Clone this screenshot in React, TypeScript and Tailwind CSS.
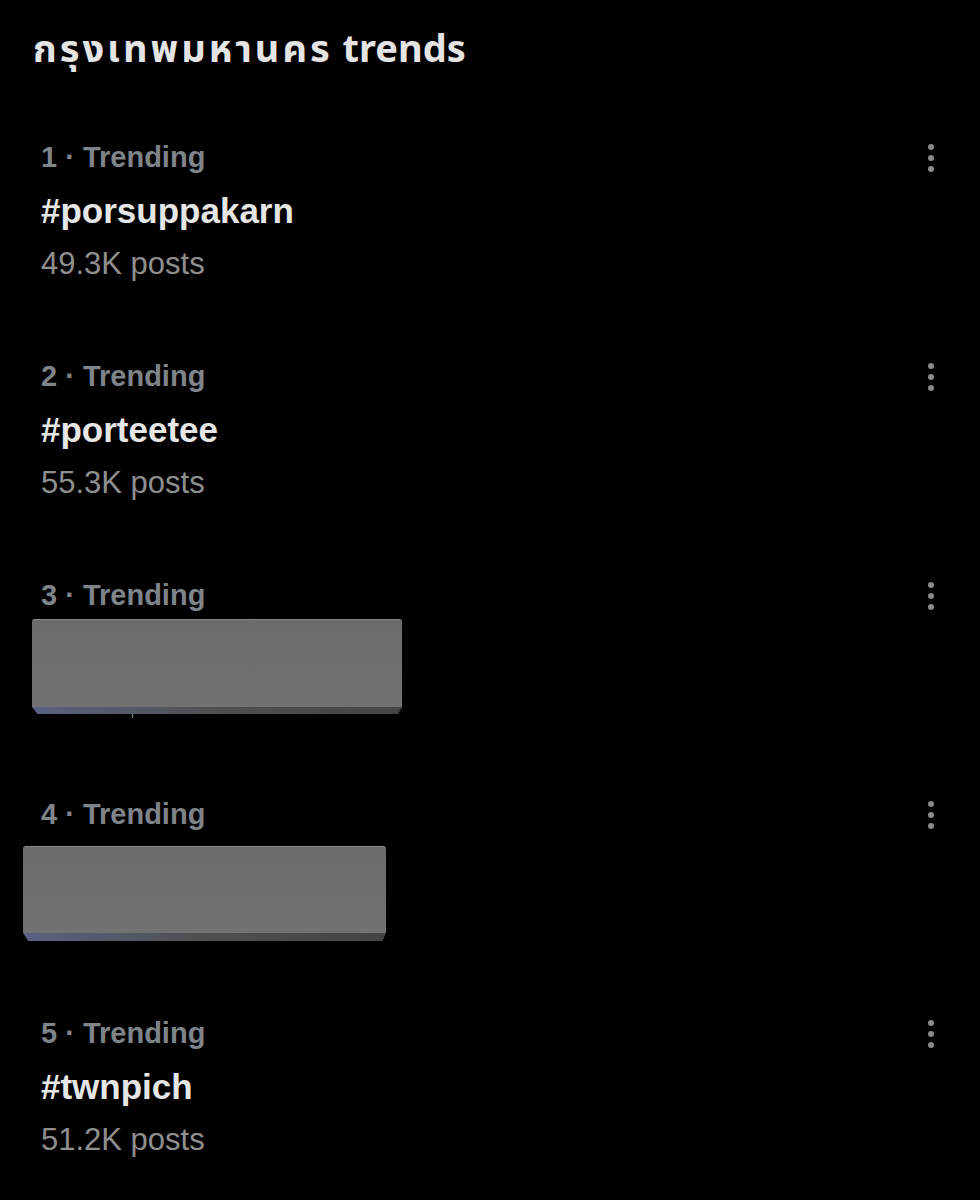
const trends = [
  { rank: 1, tag: '#porsuppakarn', posts: '49.3K posts' },
  { rank: 2, tag: '#porteetee', posts: '55.3K posts' },
  { rank: 3, hidden: 'a' },
  { rank: 4, hidden: 'b' },
  { rank: 5, tag: '#twnpich', posts: '51.2K posts' },
];

function MoreDots() {
  return (
    <div className="flex flex-col items-center gap-[5px] pt-[7px]">
      <span className="w-[6px] h-[6px] rounded-full bg-[#8a8a8a]" />
      <span className="w-[6px] h-[6px] rounded-full bg-[#8a8a8a]" />
      <span className="w-[6px] h-[6px] rounded-full bg-[#8a8a8a]" />
    </div>
  );
}

function CoverBox({ variant }: { variant: string }) {
  if (variant === 'a') {
    return (
      <div className="mt-[4px] ml-[-9px] w-[370px]">
        <div className="h-[88px] rounded-t-[3px] bg-gradient-to-b from-[#6b6b6b] to-[#727272] border-t border-[#8a8a8a]" />
        <div className="h-[7px] bg-gradient-to-r from-[#5b6183] via-[#505050] to-[#454545] [clip-path:polygon(0_0,100%_0,99%_100%,1.5%_100%)]" />
        <div className="ml-[100px] w-[1px] h-[4px] bg-[#8a8a8a]" />
      </div>
    );
  }
  return (
    <div className="mt-[12px] ml-[-18px] w-[363px]">
      <div className="h-[87px] rounded-t-[3px] bg-gradient-to-b from-[#6b6b6b] to-[#727272] border-t border-[#8a8a8a]" />
      <div className="h-[8px] bg-gradient-to-r from-[#5b6183] via-[#4f4f4f] to-[#444444] [clip-path:polygon(0_0,100%_0,99%_100%,1.5%_100%)]" />
    </div>
  );
}

export default function App() {
  return (
    <div
      className="w-[980px] h-[1200px] bg-black overflow-hidden"
      style={{ fontFamily: '"Liberation Sans", "Noto Sans", "Noto Sans Thai", sans-serif' }}
    >
      <h1
        className="pl-[33px] pt-[22px] h-[72px] leading-[50px] text-[38px] font-bold text-[#e4e4e4]"
        style={{ fontFamily: '"Noto Sans", "Noto Sans Thai", "Liberation Sans", sans-serif' }}
      >
        <span className="tracking-[3px]">กรุงเทพมหานคร</span> trends
      </h1>

      <div className="mt-[65px] flex flex-col">
        {trends.map((t) => (
          <div key={t.rank} className="h-[219px] pl-[41px] pr-[46px] flex justify-between items-start">
            <div className="flex flex-col">
              <div className="h-[40px] leading-[40px] text-[29px] font-bold text-[#7e848a]">
                {t.rank} · Trending
              </div>
              {t.hidden ? (
                <CoverBox variant={t.hidden} />
              ) : (
                <>
                  <div className="mt-[14px] h-[40px] leading-[40px] text-[35px] font-bold text-[#e6e6e6]">
                    {t.tag}
                  </div>
                  <div className="mt-[13px] h-[40px] leading-[40px] text-[31px] text-[#8f8f8f]">
                    {t.posts}
                  </div>
                </>
              )}
            </div>
            <MoreDots />
          </div>
        ))}
      </div>
    </div>
  );
}
